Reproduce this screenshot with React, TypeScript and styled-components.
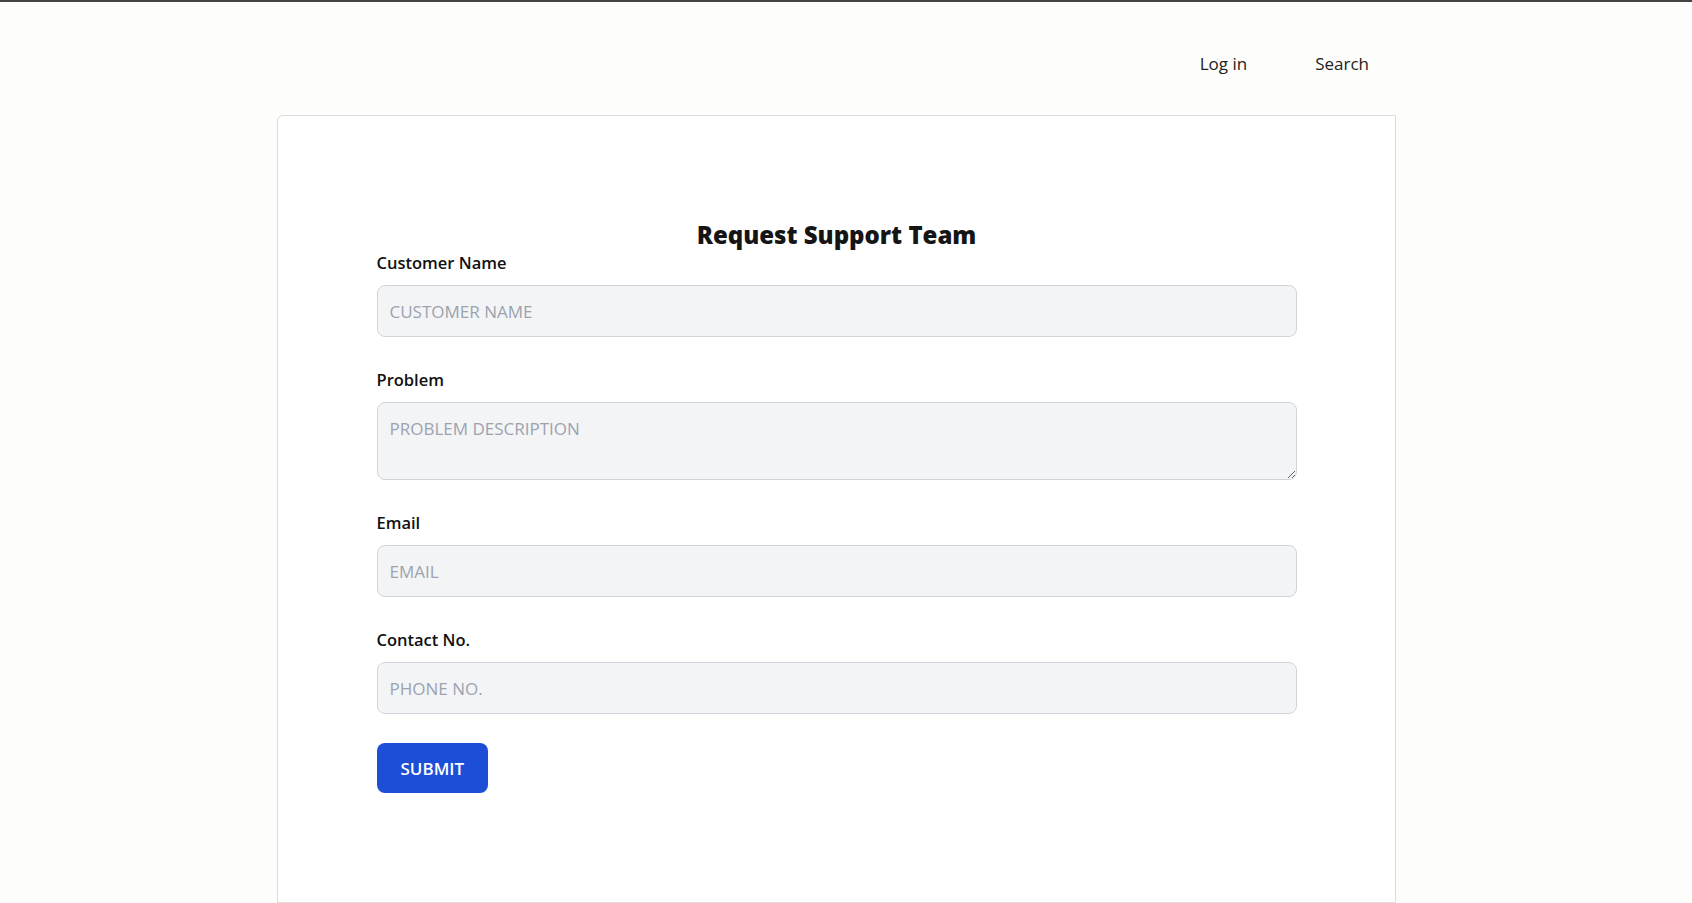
import React from "react";
import styled, { createGlobalStyle } from "styled-components";

const GlobalStyle = createGlobalStyle`
  html, body {
    margin: 0;
    padding: 0;
    background: #fdfdfb;
  }
  body {
    border-top: 2px solid #444444;
    font-family: "Open Sans", "Noto Sans", "Liberation Sans", sans-serif;
    color: #111111;
    overflow: hidden;
  }
  * { box-sizing: border-box; }
`;

const Page = styled.div`
  width: 1119px;
  margin-left: 277px;
`;

const Header = styled.nav`
  display: flex;
  justify-content: flex-end;
  gap: 68px;
  padding: 48px 27px 37px 0;
`;

const NavLink = styled.a`
  font-size: 17px;
  line-height: 28px;
  color: #222222;
  text-decoration: none;
  cursor: pointer;
`;

const Card = styled.main`
  background: #ffffff;
  border: 1px solid #dcdcdc;
  border-radius: 6px 0 0 0;
  height: 788px;
  padding-top: 103px;
`;

const Form = styled.form`
  width: 920px;
  margin: 0 auto;
  display: flex;
  flex-direction: column;
`;

const Title = styled.h1`
  margin: 0;
  text-align: center;
  font-size: 24px;
  line-height: 32px;
  font-weight: 800;
  color: #151515;
`;

const Field = styled.div<{ $last?: boolean }>`
  display: flex;
  flex-direction: column;
  margin-bottom: ${(p) => (p.$last ? "29px" : "31px")};
`;

const Label = styled.label`
  font-size: 16.5px;
  line-height: 24px;
  font-weight: 600;
  color: #111111;
  margin-bottom: 10px;
`;

const inputBase = `
  width: 100%;
  font-family: "Open Sans", "Noto Sans", "Liberation Sans", sans-serif;
  font-size: 17px;
  color: #111827;
  background: #f3f4f6;
  border: 1px solid #d1d5db;
  border-radius: 8px;
  padding: 0 12px;
  outline: none;
  &::placeholder {
    color: #9ca3af;
  }
`;

const Input = styled.input`
  ${inputBase}
  height: 52px;
`;

const TextArea = styled.textarea`
  ${inputBase}
  height: 78px;
  padding-top: 14px;
  line-height: 24px;
  resize: vertical;
  display: block;
`;

const SubmitButton = styled.button`
  align-self: flex-start;
  height: 50px;
  padding: 0 24px;
  background: #1d4ed8;
  color: #ffffff;
  border: none;
  border-radius: 8px;
  font-family: "Open Sans", "Noto Sans", "Liberation Sans", sans-serif;
  font-size: 17px;
  font-weight: 600;
  cursor: pointer;
`;

export default function App() {
  return (
    <>
      <GlobalStyle />
      <Page>
        <Header>
          <NavLink>Log in</NavLink>
          <NavLink>Search</NavLink>
        </Header>
        <Card>
          <Form onSubmit={(e) => e.preventDefault()}>
            <Title>Request Support Team</Title>
            <Field>
              <Label htmlFor="name">Customer Name</Label>
              <Input id="name" placeholder="CUSTOMER NAME" />
            </Field>
            <Field>
              <Label htmlFor="problem">Problem</Label>
              <TextArea id="problem" placeholder="PROBLEM DESCRIPTION" />
            </Field>
            <Field>
              <Label htmlFor="email">Email</Label>
              <Input id="email" placeholder="EMAIL" />
            </Field>
            <Field $last>
              <Label htmlFor="phone">Contact No.</Label>
              <Input id="phone" placeholder="PHONE NO." />
            </Field>
            <SubmitButton type="submit">SUBMIT</SubmitButton>
          </Form>
        </Card>
      </Page>
    </>
  );
}
